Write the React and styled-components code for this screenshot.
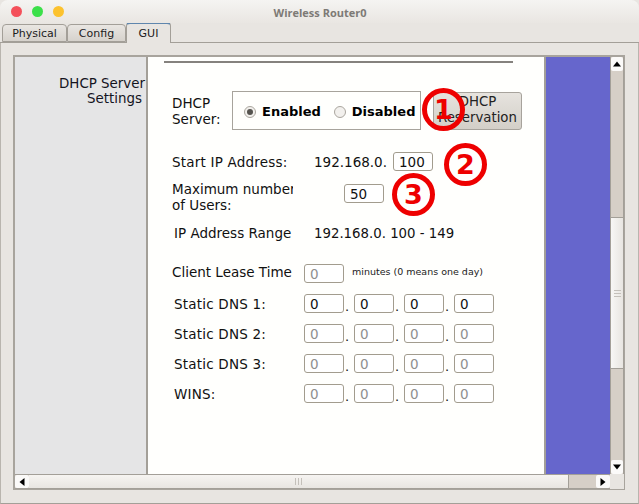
import { createGlobalStyle } from 'styled-components';
import styled from 'styled-components';

const GlobalStyle = createGlobalStyle`
  html, body {
    margin: 0;
    padding: 0;
    background: #f4f2ef;
  }
  * {
    box-sizing: border-box;
  }
`;

const Window = styled.div`
  position: relative;
  width: 639px;
  height: 504px;
  overflow: hidden;
  display: flex;
  flex-direction: column;
  background: #e8e5e1;
  font-family: "DejaVu Sans", sans-serif;
  color: #111;
`;

const TitleBar = styled.header`
  position: relative;
  height: 23px;
  flex: none;
  display: flex;
  align-items: center;
  justify-content: center;
  background: linear-gradient(#f5f4f2, #e9e6e2);
  border-radius: 8px 8px 0 0;
`;

const Lights = styled.div`
  position: absolute;
  left: 11px;
  top: 6px;
  display: flex;
  gap: 10px;
`;

const Light = styled.span`
  width: 11px;
  height: 11px;
  border-radius: 50%;
  background: ${p => p.$color};
`;

const Title = styled.div`
  font-family: "Open Sans", sans-serif;
  font-weight: 700;
  font-size: 11px;
  color: #7d7a76;
  padding: 1px 0 0 1px;
`;

const Tabs = styled.nav`
  height: 20px;
  flex: none;
  display: flex;
  align-items: flex-end;
  padding-left: 2px;
  border-bottom: 1px solid #a39f98;
`;

const Tab = styled.div`
  height: ${p => (p.$active ? '21px' : '18px')};
  width: ${p => p.$width}px;
  margin-bottom: ${p => (p.$active ? '-1px' : '0')};
  display: flex;
  align-items: center;
  justify-content: center;
  padding-bottom: ${p => (p.$active ? '1px' : '0')};
  font-size: 11px;
  color: #1c1c1c;
  border: 1px solid #a39f98;
  border-bottom: ${p => (p.$active ? 'none' : '1px solid #a39f98')};
  border-top: ${p => (p.$active ? '2px solid #5f86ad' : '1px solid #a39f98')};
  border-radius: 4px 4px 0 0;
  background: ${p => (p.$active ? '#e8e5e1' : 'linear-gradient(#e9e6e2, #d6d2cc)')};
`;

const TabBody = styled.div`
  flex: 1;
  padding: 12px 13px 12px 12px;
  border-left: 1px solid #b9b5ae;
  border-right: 1px solid #b9b5ae;
  border-bottom: 1px solid #a39f98;
`;

const ScrollFrame = styled.div`
  width: 612px;
  height: 435px;
  display: grid;
  grid-template-columns: 1fr 14px;
  grid-template-rows: 1fr 15px;
  border: 2px solid #a8a49d;
  border-right-width: 1px;
  border-bottom-width: 1px;
  background: #e8e5e1;
`;

const Viewport = styled.div`
  display: flex;
  min-width: 0;
  min-height: 0;
`;

const Sidebar = styled.aside`
  width: 131px;
  flex: none;
  overflow: hidden;
  background: #e5e5e6;
  border-right: 2px solid #a39f98;
  box-sizing: content-box;
  padding-top: 19px;
  font-size: 13.4px;
  line-height: 15px;
  text-align: right;
  white-space: nowrap;
  color: #14141e;
`;

const SidebarLine = styled.div`
  padding-right: ${p => p.$pad}px;
`;

const Form = styled.main`
  width: 396px;
  flex: none;
  padding: 4px 0 0 16px;
  background: #fffffd;
  font-size: 13.5px;
  color: #111;
`;

const Rule = styled.div`
  width: 349px;
  height: 2px;
  background: #85827e;
`;

const Row = styled.div`
  display: flex;
  align-items: center;
  height: ${p => p.$height}px;
  margin-top: ${p => p.$top}px;
  padding-left: ${p => p.$indent || 8}px;
`;

const Label = styled.div`
  width: ${p => p.$width}px;
  flex: none;
  overflow: hidden;
  white-space: nowrap;
  line-height: 16px;
  letter-spacing: ${p => p.$spread || 0}px;
  padding-bottom: ${p => p.$lift || 0}px;
`;

const RadioBox = styled.div`
  width: 189px;
  height: 39px;
  flex: none;
  margin-left: 1px;
  display: flex;
  align-items: center;
  padding: 2px 0 0 11px;
  border: 1px solid #a7a39c;
  font-weight: 700;
  font-size: 13px;
  color: #000;
`;

const Radio = styled.span`
  width: 12px;
  height: 12px;
  flex: none;
  margin-right: ${p => p.$gap}px;
  display: flex;
  align-items: center;
  justify-content: center;
  border: 1px solid #aaa69f;
  border-radius: 50%;
  background: #f2f0ed;

  &::after {
    content: '';
    display: ${p => (p.$checked ? 'block' : 'none')};
    width: 6px;
    height: 6px;
    border-radius: 50%;
    background: #55534f;
  }
`;

const RadioText = styled.span`
  margin-right: ${p => p.$gap}px;
`;

const ReserveButton = styled.div`
  width: 89px;
  height: 38px;
  flex: none;
  margin-left: 12px;
  display: flex;
  align-items: center;
  justify-content: center;
  text-align: center;
  line-height: 16px;
  padding-bottom: 2px;
  font-size: 13.3px;
  border: 1px solid #a7a39c;
  border-radius: 3px;
  background: linear-gradient(#e6e3de, #d3cfc8);
  color: #222;
`;

const Field = styled.div`
  width: 40px;
  height: 19px;
  flex: none;
  display: flex;
  align-items: center;
  padding-left: 5px;
  margin-left: ${p => p.$left || 0}px;
  margin-top: ${p => p.$drop || 0}px;
  align-self: ${p => (p.$drop ? 'flex-start' : 'auto')};
  border: 1px solid #a29c8e;
  border-radius: 3px;
  background: #fff;
  font-size: 13.5px;
  color: ${p => (p.$disabled ? '#8f8f8f' : '#111')};
`;

const Address = styled.span`
  width: 79px;
  flex: none;
  white-space: nowrap;
`;

const RangeValue = styled.span`
  font-size: 13.3px;
  white-space: nowrap;
`;

const Dot = styled.span`
  width: 10px;
  flex: none;
  padding: 7px 0 0 1px;
  font-size: 13px;
  line-height: 14px;
`;

const Hint = styled.span`
  margin-left: 8px;
  padding-bottom: 4px;
  font-size: 9.5px;
  color: #222;
`;

const Purple = styled.div`
  flex: 1;
  background: #6666cc;
  border-left: 2px solid #a39f98;
`;

const VScroll = styled.div`
  display: flex;
  flex-direction: column;
  background: #d6cfc7;
  border-left: 1px solid #a39f98;
  border-right: 1px solid #a39f98;
`;

const HScroll = styled.div`
  display: flex;
  background: #d6cfc7;
  border-top: 1px solid #a39f98;
  border-bottom: 1px solid #a39f98;
`;

const ArrowButton = styled.div`
  flex: none;
  display: flex;
  align-items: center;
  justify-content: center;
  width: ${p => (p.$horizontal ? '14px' : '100%')};
  height: ${p => (p.$horizontal ? '100%' : '14px')};
  background: #fbfaf9;
  border-radius: 2px;
`;

const Thumb = styled.div`
  flex: none;
  display: flex;
  align-items: center;
  justify-content: center;
  background: ${p => (p.$horizontal
    ? 'linear-gradient(#f6f4f1, #e8e5e1)'
    : 'linear-gradient(90deg, #f8f7f5, #e8e5e1)')};
  width: ${p => (p.$horizontal ? `${p.$size}px` : '100%')};
  height: ${p => (p.$horizontal ? '100%' : `${p.$size}px`)};
  margin-top: ${p => p.$offset || 0}px;
  ${p => (p.$horizontal
    ? 'border-right: 1px solid #a39f98;'
    : 'border-top: 1px solid #a39f98; border-bottom: 1px solid #a39f98;')}
`;

const Spacer = styled.div`
  flex: 1;
`;

const Corner = styled.div`
  background: #e8e5e1;
`;

const Badge = styled.div`
  position: absolute;
  left: ${p => p.$x}px;
  top: ${p => p.$y}px;
  width: 43px;
  height: 43px;
  display: flex;
  align-items: center;
  justify-content: center;
  border: 5px solid #ee0000;
  border-radius: 50%;
  font-family: "DejaVu Sans", sans-serif;
  font-weight: 700;
  font-size: 27px;
  color: #ee0000;
`;

const Arrow = ({ d }) => (
  <svg width="8" height="8" viewBox="0 0 8 8">
    <path d={d} fill="#000" />
  </svg>
);

const Grip = ({ horizontal }) => (
  <svg width="9" height="9" viewBox="0 0 9 9">
    <path
      d={horizontal ? 'M1.5 1v7M4.5 1v7M7.5 1v7' : 'M1 1.5h7M1 4.5h7M1 7.5h7'}
      stroke="#c4c0ba"
      strokeWidth="1"
    />
  </svg>
);

const DnsRow = ({ label, disabled }) => (
  <Row $height={19} $top={11} $indent={10}>
    <Label $width={130} $spread={0.2}>{label}</Label>
    <Field $disabled={disabled}>0</Field>
    <Dot>.</Dot>
    <Field $disabled={disabled}>0</Field>
    <Dot>.</Dot>
    <Field $disabled={disabled}>0</Field>
    <Dot>.</Dot>
    <Field $disabled={disabled}>0</Field>
  </Row>
);

export default function App() {
  return (
    <Window>
      <GlobalStyle />
      <TitleBar>
        <Lights>
          <Light $color="#f4505a" />
          <Light $color="#3be04a" />
          <Light $color="#fcc22e" />
        </Lights>
        <Title>Wireless Router0</Title>
      </TitleBar>
      <Tabs>
        <Tab $width={65}>Physical</Tab>
        <Tab $width={59}>Config</Tab>
        <Tab $width={45} $active>GUI</Tab>
      </Tabs>
      <TabBody>
        <ScrollFrame>
          <Viewport>
            <Sidebar>
              <SidebarLine $pad={1}>DHCP Server</SidebarLine>
              <SidebarLine $pad={4}>Settings</SidebarLine>
            </Sidebar>
            <Form>
              <Rule />
              <Row $height={39} $top={28}>
                <Label $width={59}>DHCP<br />Server:</Label>
                <RadioBox>
                  <Radio $checked $gap={6} />
                  <RadioText $gap={13}>Enabled</RadioText>
                  <Radio $gap={6} />
                  <span>Disabled</span>
                </RadioBox>
                <ReserveButton>DHCP<br />Reservation</ReserveButton>
              </Row>
              <Row $height={19} $top={22}>
                <Label $width={142} $spread={0.2}>Start IP Address:</Label>
                <Address>192.168.0.</Address>
                <Field>100</Field>
              </Row>
              <Row $height={32} $top={10}>
                <Label $width={121}>Maximum number<br />of Users:</Label>
                <Field $left={51} $drop={3}>50</Field>
              </Row>
              <Row $height={20} $top={10} $indent={10}>
                <Label $width={140}>IP Address Range</Label>
                <RangeValue>192.168.0. 100 - 149</RangeValue>
              </Row>
              <Row $height={19} $top={21}>
                <Label $width={132} $lift={4}>Client Lease Time</Label>
                <Field $disabled>0</Field>
                <Hint>minutes (0 means one day)</Hint>
              </Row>
              <DnsRow label="Static DNS 1:" />
              <DnsRow label="Static DNS 2:" disabled />
              <DnsRow label="Static DNS 3:" disabled />
              <DnsRow label="WINS:" disabled />
            </Form>
            <Purple />
          </Viewport>
          <VScroll>
            <ArrowButton><Arrow d="M4 1.5 8 6.5H0Z" /></ArrowButton>
            <Thumb $size={152} $offset={146}><Grip /></Thumb>
            <Spacer />
            <ArrowButton><Arrow d="M4 6.5 0 1.5H8Z" /></ArrowButton>
          </VScroll>
          <HScroll>
            <ArrowButton $horizontal><Arrow d="M1.5 4 6.5 0V8Z" /></ArrowButton>
            <Thumb $horizontal $size={540}><Grip horizontal /></Thumb>
            <Spacer />
            <ArrowButton $horizontal><Arrow d="M6.5 4 1.5 0V8Z" /></ArrowButton>
          </HScroll>
          <Corner />
        </ScrollFrame>
      </TabBody>
      <Badge $x={422} $y={88}>1</Badge>
      <Badge $x={444} $y={143}>2</Badge>
      <Badge $x={392} $y={173}>3</Badge>
    </Window>
  );
}
